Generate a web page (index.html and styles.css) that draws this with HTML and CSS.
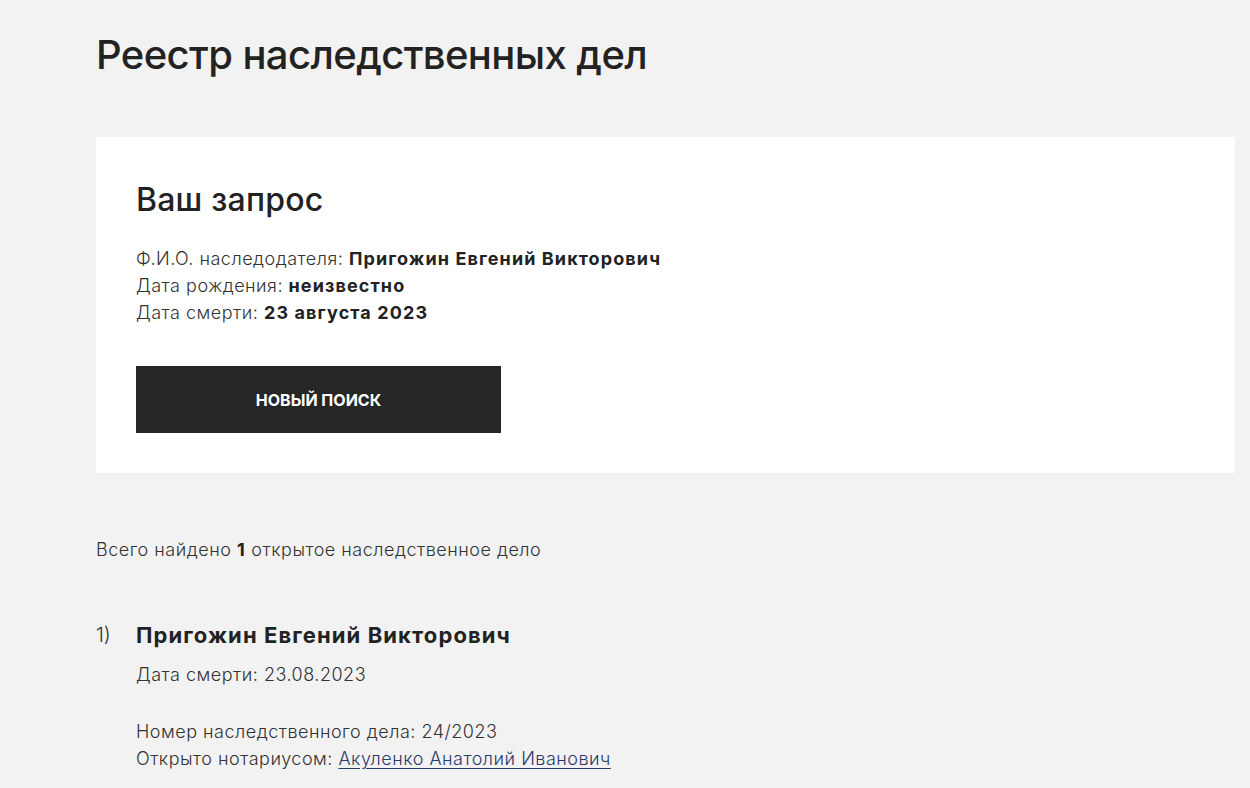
FILE: index.html
```html
<!DOCTYPE html>
<html lang="ru">
<head>
  <meta charset="UTF-8" />
  <title>Реестр наследственных дел</title>
  <link rel="stylesheet" href="styles.css">
</head>
<body>
  <div class="page">
    <h1 class="page-title">Реестр наследственных дел</h1>

    <section class="request">
      <h2>Ваш запрос</h2>
      <div class="request-info">
        <p>Ф.И.О. наследодателя: <b>Пригожин Евгений Викторович</b></p>
        <p>Дата рождения: <b>неизвестно</b></p>
        <p>Дата смерти: <b>23 августа 2023</b></p>
      </div>
      <div class="button">Новый поиск</div>
    </section>

    <p class="total">Всего найдено <b>1</b> открытое наследственное дело</p>

    <ol class="results">
      <li class="case">
        <span class="case-num">1)</span>
        <div class="case-body">
          <h3>Пригожин Евгений Викторович</h3>
          <p class="case-date">Дата смерти: 23.08.2023</p>
          <p>Номер наследственного дела: 24/2023</p>
          <p>Открыто нотариусом: <a href="#">Акуленко Анатолий Иванович</a></p>
        </div>
      </li>
    </ol>
  </div>
</body>
</html>
```

FILE: styles.css
```css
* { box-sizing: border-box; margin: 0; padding: 0; }
html, body {
  background: #f2f2f2;
  font-family: Inter, "Liberation Sans", Arial, sans-serif;
  font-weight: 300;
  color: #333;
}
b { font-weight: 700; letter-spacing: 1.1px; }
.page {
  padding: 31px 15px 0 96px;
}
.page-title {
  font-size: 40px;
  line-height: 48px;
  font-weight: 500;
  letter-spacing: -0.6px;
  color: #222;
  margin-bottom: 58px;
}
.request {
  background: #fff;
  padding: 44px 40px 40px;
}
.request h2 {
  font-size: 32px;
  line-height: 38px;
  font-weight: 500;
  letter-spacing: 0.2px;
  color: #222;
  margin-bottom: 26px;
}
.request-info p, .total, .case-body p {
  font-size: 18px;
  line-height: 27px;
  letter-spacing: 0.5px;
}
.request-info b, .total b { color: #222; }
.button {
  margin-top: 40px;
  width: 365px;
  height: 67px;
  background: #262626;
  color: #fff;
  font-size: 16px;
  font-weight: 700;
  text-transform: uppercase;
  display: flex;
  align-items: center;
  justify-content: center;
  cursor: pointer;
}
.total {
  margin-top: 63px;
}
.results {
  list-style: none;
  margin-top: 57px;
}
.case {
  display: flex;
}
.case-num {
  width: 40px;
  font-size: 20px;
  line-height: 30px;
}
.case-body h3 {
  font-size: 22px;
  line-height: 30px;
  font-weight: 700;
  letter-spacing: 1.1px;
  color: #222;
  margin-bottom: 11px;
}
.case-date {
  margin-bottom: 30px;
}
.case-body a {
  color: #2a3a6a;
  text-underline-offset: 3px;
}
```
